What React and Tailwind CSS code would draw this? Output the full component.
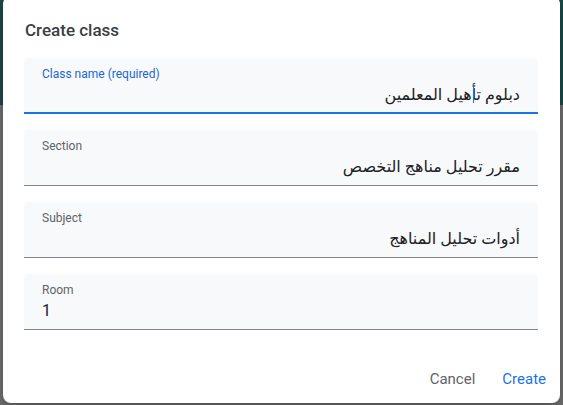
import React from "react";

const fields = [
  { label: "Class name (required)", value: "دبلوم تأهيل المعلمين", active: true },
  { label: "Section", value: "مقرر تحليل مناهج التخصص" },
  { label: "Subject", value: "أدوات تحليل المناهج" },
  { label: "Room", value: "1" },
];

const Field = ({ label, value, active }) => {
  return (
    <div
      className={`relative h-[56px] rounded-t-[4px] bg-[#f8f9fa] px-[18px] pt-[8px] ${
        active ? "border-b-2 border-[#1a73e8]" : "border-b border-[#80868b]"
      }`}
    >
      <div
        className={`text-[12px] leading-[16px] ${
          active ? "text-[#1967d2]" : "text-[#5f6368]"
        }`}
      >
        {label}
      </div>
      <div
        dir="auto"
        className="mt-[2px] text-[16px] leading-[22px] text-[#202124] font-['Roboto','DejaVu_Sans',sans-serif]"
      >
        {value}
      </div>
      {/* caret */}
      {active && (
        <span className="absolute left-[449px] top-[28px] h-[17px] w-px bg-[#1a73e8]" />
      )}
    </div>
  );
};

const App = () => {
  return (
    <div className="h-[405px] w-[563px] overflow-hidden bg-[linear-gradient(to_bottom,#1c4a47_0px,#1c4a47_105px,#707070_105px)] px-[3px] font-['Roboto',sans-serif]">
      <div className="-mt-[4px] h-[407px] rounded-[8px] bg-white pt-[4px] shadow-[0_4px_12px_rgba(0,0,0,0.3)]">
        <h2 className="px-[22px] pt-[18px] text-[17px] font-medium leading-[24px] text-[#3c4043]">
          Create class
        </h2>
        <div className="mt-[16px] flex flex-col gap-[16px] pl-[21px] pr-[22px]">
          {fields.map((f, i) => (
            <Field key={i} {...f} />
          ))}
        </div>
        <div className="mt-[39px] flex justify-end gap-[27px] pr-[14px] text-[15px] leading-[20px]">
          <button className="text-[#5f6368]">Cancel</button>
          <button className="text-[#1a73e8]">Create</button>
        </div>
      </div>
    </div>
  );
};

export default App;
